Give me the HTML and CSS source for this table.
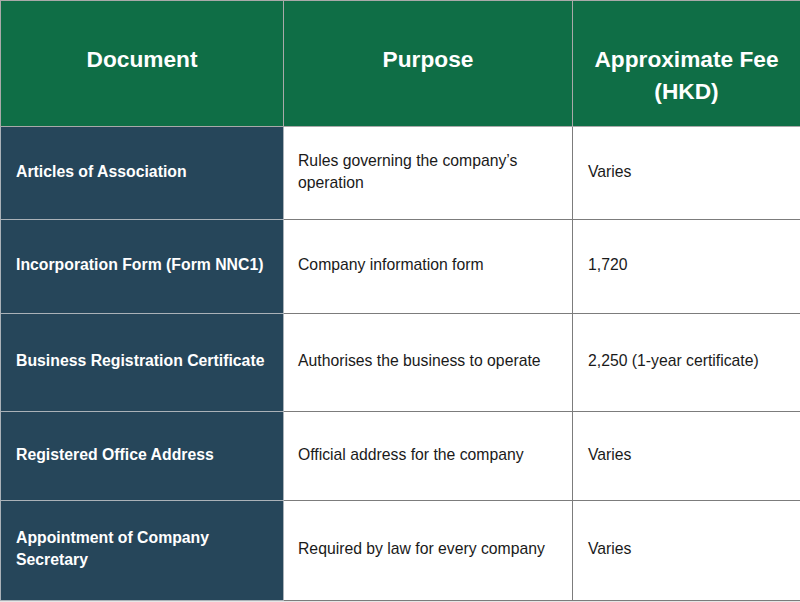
FILE: index.html
```html
<!DOCTYPE html>
<html>
<head>
<meta charset="utf-8">
<link rel="stylesheet" href="styles.css">
</head>
<body>
<table class="fees">
  <colgroup>
    <col class="c1"><col class="c2"><col class="c3">
  </colgroup>
  <thead>
    <tr class="head">
      <th>Document</th>
      <th>Purpose</th>
      <th>Approximate Fee (HKD)</th>
    </tr>
  </thead>
  <tbody>
    <tr class="r1">
      <td class="doc">Articles of Association</td>
      <td>Rules governing the company’s operation</td>
      <td>Varies</td>
    </tr>
    <tr class="r2">
      <td class="doc">Incorporation Form (Form NNC1)</td>
      <td>Company information form</td>
      <td>1,720</td>
    </tr>
    <tr class="r3">
      <td class="doc">Business Registration Certificate</td>
      <td>Authorises the business to operate</td>
      <td>2,250 (1-year certificate)</td>
    </tr>
    <tr class="r4">
      <td class="doc">Registered Office Address</td>
      <td>Official address for the company</td>
      <td>Varies</td>
    </tr>
    <tr class="r5">
      <td class="doc">Appointment of Company Secretary</td>
      <td>Required by law for every company</td>
      <td>Varies</td>
    </tr>
  </tbody>
</table>
</body>
</html>
```
FILE: styles.css
```css
html, body {
  margin: 0;
  padding: 0;
}
body {
  background: #e6e6e6;
  font-family: "Liberation Sans", Arial, sans-serif;
}
.fees {
  border-collapse: collapse;
  table-layout: fixed;
  width: 800px;
  background: #ffffff;
}
.c1 { width: 283px; }
.c2 { width: 289px; }
.c3 { width: 228px; }
.fees th,
.fees td {
  border: 1px solid #7c7c7c;
  padding: 0 8px 3px 15px;
  text-align: left;
  vertical-align: middle;
  font-size: 15.75px;
  line-height: 22px;
  color: #1a1a1a;
  box-sizing: border-box;
}
.fees td:nth-child(2) {
  padding-left: 14px;
}
.fees th {
  background: #0f6e46;
  color: #ffffff;
  font-weight: bold;
  font-size: 22.7px;
  line-height: 32px;
  text-align: center;
  vertical-align: top;
  padding: 42px 16px 0;
  border-color: #a9a9a9;
}
.fees td.doc {
  background: #26465a;
  color: #ffffff;
  font-weight: bold;
  border-color: #aab2b8;
  font-size: 15.8px;
}
.head { height: 126px; }
.r1 { height: 93px; }
.r2 { height: 94px; }
.r3 { height: 98px; }
.r4 { height: 89px; }
.r5 { height: 100px; }
```
